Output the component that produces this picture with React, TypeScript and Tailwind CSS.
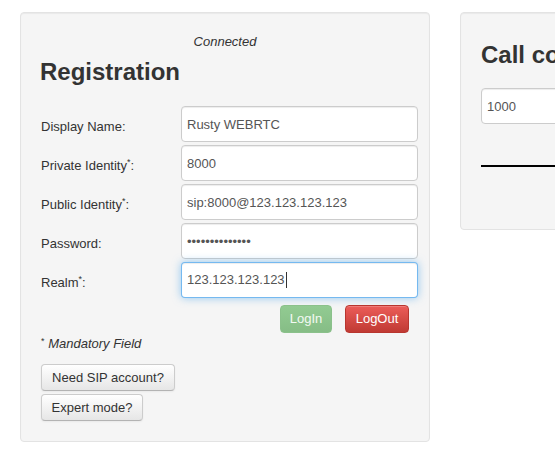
import React from 'react';

const font = { fontFamily: '"Liberation Sans", Arial, Helvetica, sans-serif' };

const fields = [
  { label: 'Display Name', required: false, value: 'Rusty WEBRTC', type: 'text' },
  { label: 'Private Identity', required: true, value: '8000', type: 'text' },
  { label: 'Public Identity', required: true, value: 'sip:8000@123.123.123.123', type: 'text' },
  { label: 'Password', required: false, value: '12345678901234', type: 'password' },
];

function Label({ text, required }: { text: string; required: boolean }) {
  return (
    <div className="w-[141px] shrink-0 pl-[1px] pt-[5px] text-[13px] text-[#333]">
      {text}
      {required && <sup className="text-[9px]">*</sup>}:
    </div>
  );
}

function GrayButton({ children, width }: { children: React.ReactNode; width: string }) {
  return (
    <button
      className={`${width} h-[27px] rounded-[4px] border border-[#cccccc] border-b-[#b3b3b3] bg-gradient-to-b from-white to-[#e6e6e6] text-[13px] text-[#333] shadow-[inset_0_1px_0_rgba(255,255,255,0.2),0_1px_2px_rgba(0,0,0,0.05)]`}
    >
      {children}
    </button>
  );
}

export default function App() {
  return (
    <div className="flex w-[555px] h-[465px] gap-[30px] overflow-hidden bg-white pl-[20px] pt-[12px]" style={font}>
      {/* Registration panel */}
      <div className="flex h-[430px] w-[410px] shrink-0 flex-col rounded-[4px] border border-[#e3e3e3] bg-[#f5f5f5] pl-[19px] pr-[10px] pt-[20px] shadow-[inset_0_1px_1px_rgba(0,0,0,0.05)]">
        <div className="h-[18px] pr-[9px] text-center text-[13px] italic leading-[18px] text-[#333]">Connected</div>
        <h2 className="mt-[6px] h-[30px] text-[24px] font-bold leading-[30px] text-[#333]">Registration</h2>

        <div className="mt-[19px] flex flex-col gap-[3px]">
          {fields.map((f) => (
            <div key={f.label} className="flex h-[36px] items-center">
              <Label text={f.label} required={f.required} />
              <input
                readOnly
                type={f.type}
                value={f.value}
                className="h-[36px] w-[237px] rounded-[4px] border border-[#cccccc] bg-white px-[5px] text-[13px] text-[#555] shadow-[inset_0_1px_1px_rgba(0,0,0,0.075)] outline-none"
              />
            </div>
          ))}
          <div className="flex h-[36px] items-center">
            <Label text="Realm" required />
            <div className="flex h-[36px] w-[237px] items-center rounded-[4px] border border-[rgba(82,168,236,0.8)] bg-white px-[5px] text-[13px] text-[#555] shadow-[inset_0_1px_1px_rgba(0,0,0,0.075),0_0_8px_rgba(82,168,236,0.6)]">
              123.123.123.123
              <span className="ml-[1px] h-[16px] w-[1px] bg-[#333]" />
            </div>
          </div>
        </div>

        <div className="mt-[7px] flex h-[28px] gap-[13px] pl-[240px]">
          <button className="h-[28px] w-[52px] rounded-[4px] border border-[#8bc18b] bg-gradient-to-b from-[#92cb92] to-[#86bd86] text-[13px] text-white/90">
            LogIn
          </button>
          <button className="h-[28px] w-[64px] rounded-[4px] border border-[#b8362f] bg-gradient-to-b from-[#ec5d59] to-[#c03a33] text-[13px] text-white shadow-[inset_0_1px_0_rgba(255,255,255,0.2)]">
            LogOut
          </button>
        </div>

        <div className="mt-[2px] h-[18px] pl-[1px] text-[13px] leading-[18px] text-[#333]">
          <sup className="text-[9px]">*</sup> <i>Mandatory Field</i>
        </div>

        <div className="mt-[11px] flex flex-col items-start gap-[3px] pl-[1px]">
          <GrayButton width="w-[134px]">Need SIP account?</GrayButton>
          <GrayButton width="w-[102px]">Expert mode?</GrayButton>
        </div>
      </div>

      {/* Call control panel */}
      <div className="flex h-[218px] w-[410px] shrink-0 flex-col rounded-[4px] border border-[#e3e3e3] bg-[#f5f5f5] px-[20px] pt-[27px] shadow-[inset_0_1px_1px_rgba(0,0,0,0.05)]">
        <h2 className="h-[30px] text-[24px] font-bold leading-[30px] text-[#333]">Call control</h2>
        <input
          readOnly
          value="1000"
          className="mt-[18px] h-[36px] w-[300px] rounded-[4px] border border-[#cccccc] bg-white px-[5px] text-[13px] text-[#555] shadow-[inset_0_1px_1px_rgba(0,0,0,0.075)] outline-none"
        />
        <div className="mt-[41px] h-[2px] w-[300px] bg-black" />
      </div>
    </div>
  );
}
